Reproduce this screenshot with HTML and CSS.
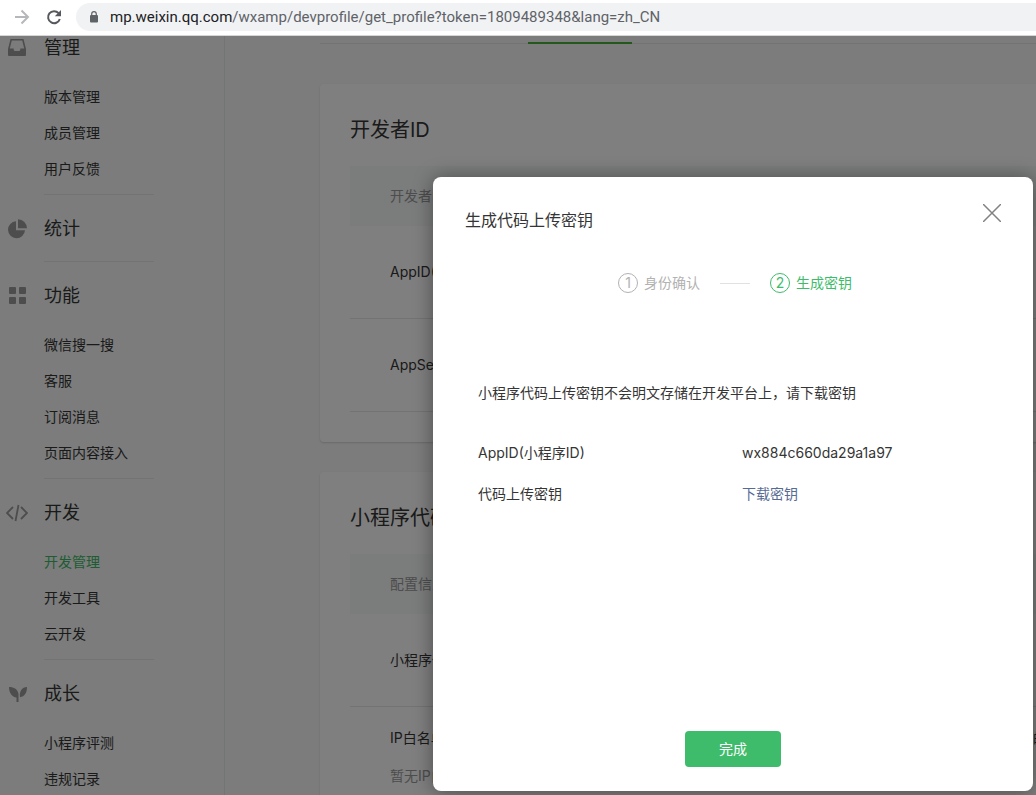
FILE: index.html
```html
<!DOCTYPE html>
<html lang="zh-CN">
<head>
<meta charset="utf-8">
<title>开发管理</title>
<link rel="stylesheet" href="styles.css">
</head>
<body>
<header class="browser-bar">
  <button class="nav-button" aria-label="前进">
    <svg width="16" height="16" viewBox="0 0 16 16" fill="none" stroke="#b5b7ba" stroke-width="2"><path d="M1 8h13M7.500 1.500L14 8l-6.500 6.500"/></svg>
  </button>
  <button class="nav-button" aria-label="重新加载">
    <svg width="16" height="16" viewBox="0 0 16 16"><path d="M12.600 4.200A6 6 0 1 0 13.800 10" fill="none" stroke="#55585c" stroke-width="2"/><path d="M15 1v6.200H8.800z" fill="#55585c"/></svg>
  </button>
  <div class="address">
    <svg width="10" height="12" viewBox="0 0 10 12"><rect x="1" y="4" width="8" height="7.500" rx="1" fill="#5f6368"/><path d="M2.700 4.500V3a2.300 2.300 0 0 1 4.600 0v1.500" fill="none" stroke="#5f6368" stroke-width="1.200"/></svg>
    <span class="url"><span class="host">mp.weixin.qq.com</span>/wxamp/devprofile/get_profile?token=1809489348&amp;lang=zh_CN</span>
  </div>
</header>
<div class="viewport">
  <div class="page">
    <nav class="sidebar">
      <section class="group">
        <h2 class="group-title"><svg class="icon" viewBox="0 0 22 22"><path fill-rule="evenodd" d="M4.500 2h13L20 12v6q0 1-1 1H3q-1 0-1-1v-6zM5.800 3.500L3.800 11.500H7.700v1q0 1.500 1.500 1.500h3.600q1.500 0 1.500-1.500v-1h3.900L16.200 3.500z"/></svg>管理</h2>
        <ul class="links"><li><a href="#">版本管理</a></li><li><a href="#">成员管理</a></li><li><a href="#">用户反馈</a></li></ul>
      </section>
      <section class="group">
        <h2 class="group-title"><svg class="icon" viewBox="0 0 22 22"><path d="M10 3.200a8.500 8.500 0 1 0 9 9h-9z"/><path d="M12 1.300a9 9 0 0 1 9 9h-9z"/></svg>统计</h2>
      </section>
      <section class="group">
        <h2 class="group-title"><svg class="icon" viewBox="0 0 22 22"><rect x="3" y="2" width="7" height="7" rx="1"/><rect x="13" y="2" width="7" height="7" rx="1"/><rect x="3" y="12" width="7" height="7" rx="1"/><rect x="13" y="12" width="7" height="7" rx="1"/></svg>功能</h2>
        <ul class="links"><li><a href="#">微信搜一搜</a></li><li><a href="#">客服</a></li><li><a href="#">订阅消息</a></li><li><a href="#">页面内容接入</a></li></ul>
      </section>
      <section class="group">
        <h2 class="group-title"><svg class="icon" viewBox="0 0 22 22"><path fill="none" stroke="#9a9a9a" stroke-width="1.800" d="M7 5L1 11l6 6M15 5l6 6-6 6M12.500 3l-3 16"/></svg>开发</h2>
        <ul class="links"><li><a class="active" href="#">开发管理</a></li><li><a href="#">开发工具</a></li><li><a href="#">云开发</a></li></ul>
      </section>
      <section class="group">
        <h2 class="group-title"><svg class="icon" viewBox="0 0 22 22"><path d="M3 4c5 0 9 2.500 9.500 7V19h-2v-4.500C6 14 3 10 3 4z"/><path d="M21 4c0 6-2.500 9.500-7 10.200C13 8.500 16 4 21 4z"/></svg>成长</h2>
        <ul class="links"><li><a href="#">小程序评测</a></li><li><a href="#">违规记录</a></li></ul>
      </section>
    </nav>
    <main class="content">
      <div class="tabs"><span class="tab-current"></span></div>
      <section class="card">
        <h3 class="card-title">开发者ID</h3>
        <table class="table">
          <thead><tr><th>开发者ID</th><th class="side"></th></tr></thead>
          <tbody>
            <tr><td>AppID(小程序ID)</td><td class="side"></td></tr>
            <tr><td>AppSecret(小程序密钥)</td><td class="side"></td></tr>
          </tbody>
        </table>
      </section>
      <section class="card">
        <h3 class="card-title">小程序代码上传</h3>
        <table class="table">
          <thead><tr><th>配置信息</th><th class="side"></th></tr></thead>
          <tbody>
            <tr><td>小程序代码上传密钥</td><td class="side"></td></tr>
            <tr><td class="stacked">IP白名单<p class="hint">暂无IP白名单</p></td><td class="stacked side">的</td></tr>
          </tbody>
        </table>
      </section>
    </main>
  </div>
  <div class="mask"></div>
  <div class="dialog" role="dialog" aria-labelledby="dialog-title">
    <header class="dialog-head">
      <h2 class="dialog-title" id="dialog-title">生成代码上传密钥</h2>
      <button class="close" aria-label="关闭"><svg width="18" height="18" viewBox="0 0 18 18" stroke="#828282" stroke-width="1.500"><path d="M0 0l18 18M18 0L0 18"/></svg></button>
    </header>
    <ol class="steps">
      <li class="step"><span class="step-no">1</span>身份确认</li>
      <li class="step current"><span class="step-no">2</span>生成密钥</li>
    </ol>
    <div class="dialog-body">
      <p class="notice">小程序代码上传密钥不会明文存储在开发平台上，请下载密钥</p>
      <dl class="details">
        <dt>AppID(小程序ID)</dt><dd>wx884c660da29a1a97</dd>
        <dt>代码上传密钥</dt><dd><a class="download" href="#">下载密钥</a></dd>
      </dl>
    </div>
    <footer class="dialog-foot"><button class="done">完成</button></footer>
  </div>
</div>
</body>
</html>
```
FILE: styles.css
```css
* { box-sizing: border-box; }

body {
  margin: 0;
  height: 100vh;
  display: flex;
  flex-direction: column;
  overflow: hidden;
  font: 14px/22px Inter, "Noto Sans CJK SC", sans-serif;
  color: #353535;
}

h2, h3, p, ul, ol, dl, dd { margin: 0; padding: 0; font-weight: 400; }
ul, ol { list-style: none; }
a { color: inherit; text-decoration: none; }
button { border: 0; padding: 0; background: none; font: inherit; cursor: pointer; }

/* Browser toolbar */
.browser-bar {
  flex: none;
  display: flex;
  align-items: center;
  gap: 16px;
  height: 36px;
  padding: 0 0 2px 14px;
  background: #fff;
  border-bottom: 1px solid #d5d6d8;
}
.nav-button { display: flex; }
.address {
  flex: 1;
  display: flex;
  align-items: center;
  gap: 11px;
  height: 28px;
  margin-left: -2px;
  padding-left: 13px;
  border-radius: 14px 0 0 14px;
  background: #f1f2f4;
}
.url { font: 15px/20px Roboto, sans-serif; color: #5f6368; white-space: nowrap; }
.host { color: #202124; }

.viewport { position: relative; flex: 1; min-height: 0; overflow: hidden; }
.page { display: flex; min-height: 100%; background: #f6f8f7; }

/* Sidebar */
.sidebar {
  flex: none;
  width: 225px;
  margin-top: -22px;
  border-right: 1px solid #e7e8e8;
}
.group { display: flex; flex-direction: column; padding-top: 16px; }
.group-title {
  display: flex;
  align-items: center;
  gap: 16px;
  height: 36px;
  padding-left: 6px;
  margin-bottom: 7px;
  font-size: 18px;
}
.icon { width: 22px; height: 22px; fill: #9a9a9a; }
.links { padding-top: 6px; }
.links a { display: block; padding-left: 44px; line-height: 36px; }
.links .active { color: #3eb967; }
.group::after {
  content: "";
  display: block;
  width: 110px;
  margin: 7px 0 0 44px;
  border-bottom: 1px solid #e4e6e5;
}

/* Page content */
.content { flex: 1; min-width: 0; padding-left: 95px; }
.tabs { height: 8px; margin-bottom: 40px; border-bottom: 1px solid #e4e6e5; }
.tab-current { display: block; width: 104px; height: 8px; margin-left: 208px; border-bottom: 2px solid #44b035; }
.card {
  min-width: 860px;
  margin-bottom: 30px;
  padding: 30px;
  border-radius: 4px;
  background: #fff;
  box-shadow: 0 1px 2px rgba(0, 0, 0, .15);
}
.card-title { margin-bottom: 20px; font-size: 20px; line-height: 32px; }
.table { width: 100%; table-layout: fixed; border-collapse: separate; border-spacing: 0; }
.table th {
  height: 60px;
  padding: 0 40px;
  background: #f6f8f8;
  color: #9a9a9a;
  font-weight: 400;
  text-align: left;
}
.table td { height: 93px; padding: 0 40px; border-bottom: 1px solid #e4e6e5; }
.table .stacked { padding-top: 20px; vertical-align: top; }
.table .side { width: 117px; padding-left: 0; }
.hint { margin-top: 16px; color: #9a9a9a; }

/* Dialog */
.mask { position: absolute; inset: 0; background: rgba(0, 0, 0, .5); }
.dialog {
  position: absolute;
  top: 141px;
  right: 3px;
  display: flex;
  flex-direction: column;
  width: 600px;
  min-height: 614px;
  border-radius: 8px;
  background: #fff;
  box-shadow: 0 1px 20px rgba(0, 0, 0, .4);
}
.dialog-head {
  display: flex;
  justify-content: space-between;
  align-items: flex-start;
  padding: 27px 32px 0;
}
.dialog-title { padding-top: 4px; font-size: 16px; line-height: 24px; }
.close { display: flex; }
.steps { display: flex; justify-content: center; margin-top: 40px; padding-left: 4px; }
.step { display: flex; align-items: center; gap: 6px; color: #b2b2b2; }
.step-no {
  display: flex;
  align-items: center;
  justify-content: center;
  width: 20px;
  height: 20px;
  border: 1px solid currentColor;
  border-radius: 50%;
}
.step.current { color: #3fbc6b; }
.step.current::before { content: ""; width: 30px; margin: 0 14px 0 20px; border-top: 1px solid #e1e1e1; }
.dialog-body { flex: 1; padding: 88px 45px 0; }
.details { display: grid; grid-template-columns: 264px 1fr; row-gap: 19px; margin-top: 38px; }
.download { color: #576b95; }
.dialog-foot { display: flex; justify-content: center; padding-bottom: 24px; }
.done { width: 96px; height: 36px; border-radius: 4px; background: #3fbc6b; color: #fff; }
```
